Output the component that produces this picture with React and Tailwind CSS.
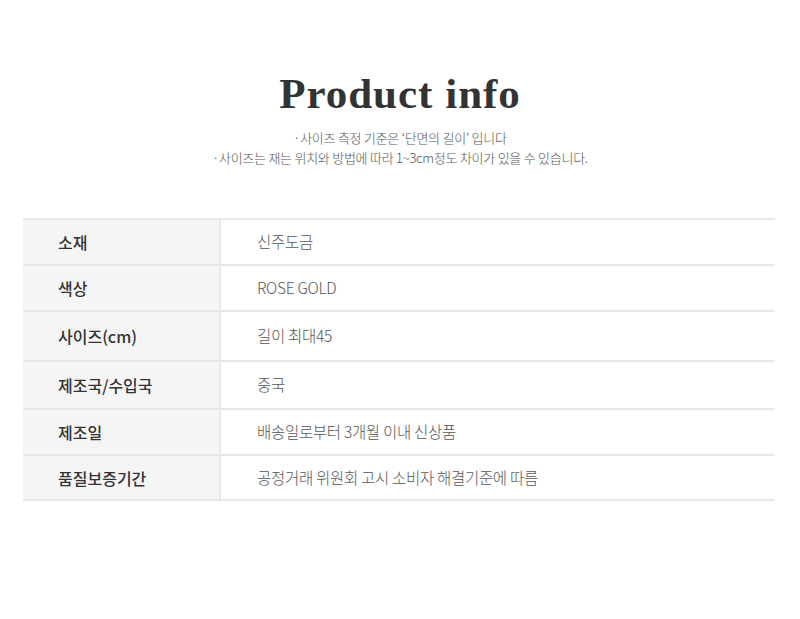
const rows = [
  { label: "소재", value: "신주도금", h: "h-[46px]" },
  { label: "색상", value: "ROSE GOLD", h: "h-[46px]" },
  { label: "사이즈(cm)", value: "길이 최대45", h: "h-[50px]" },
  { label: "제조국/수입국", value: "중국", h: "h-[48px]" },
  { label: "제조일", value: "배송일로부터 3개월 이내 신상품", h: "h-[46px]" },
  { label: "품질보증기간", value: "공정거래 위원회 고시 소비자 해결기준에 따름", h: "h-[45px]" },
];

export default function App() {
  return (
    <div className="min-h-[619px] w-[800px] bg-white font-['Noto_Sans_CJK_KR','Noto_Sans',sans-serif]">
      <div className="flex flex-col items-center pt-[68px]">
        <h1 className="font-['Liberation_Serif',serif] text-[43px] font-bold leading-[52px] tracking-[1px] text-[#333]">
          Product info
        </h1>
        <div className="mt-[8px] flex flex-col items-center text-[13px] font-light leading-[20px] tracking-[-0.25px] text-[#555]">
          <p>·사이즈 측정 기준은 ‘단면의 길이’ 입니다</p>
          <p>·사이즈는 재는 위치와 방법에 따라 1~3cm정도 차이가 있을 수 있습니다.</p>
        </div>
      </div>

      <div className="ml-[23px] mr-[25px] mt-[50px] border-t-2 border-[#e8e8e8]">
        {rows.map((r) => (
          <div key={r.label} className={`flex border-b-2 border-[#e8e8e8] ${r.h}`}>
            <div className="flex w-[198px] items-center border-r-2 border-[#e8e8e8] bg-[#f5f5f5] pl-[35px] text-[16px] font-medium text-[#333]">
              {r.label}
            </div>
            <div className="flex flex-1 items-center pl-[36px] text-[15.5px] font-light tracking-[-0.3px] text-[#555]">
              {r.value}
            </div>
          </div>
        ))}
      </div>
    </div>
  );
}
